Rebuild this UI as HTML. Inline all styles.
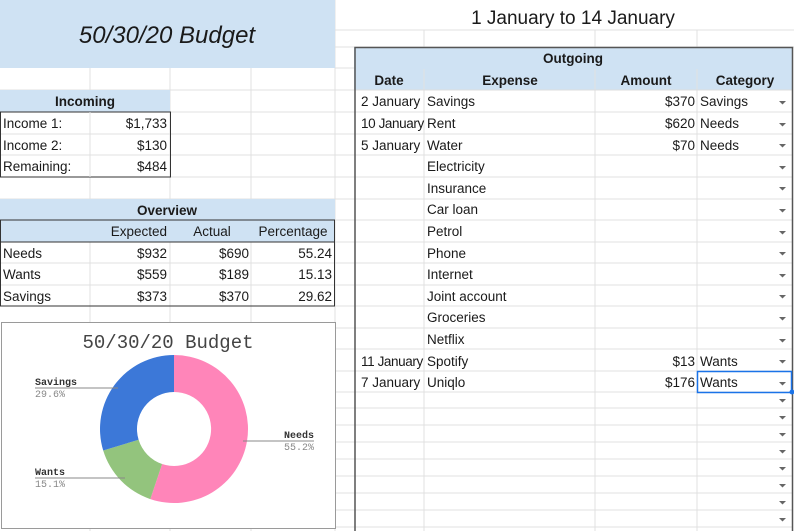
<!DOCTYPE html>
<html><head><meta charset="utf-8"><style>
html,body{margin:0;padding:0;background:#fff;width:794px;height:531px;overflow:hidden}
svg{display:block}
text{font-family:"Liberation Sans",sans-serif;font-size:13.5px;fill:#1a1a1a}
.b{font-weight:bold}
.m{font-family:"Liberation Mono",monospace}
.g{stroke:#e1e1e1;stroke-width:1}
</style></head><body>
<svg width="794" height="531" viewBox="0 0 794 531" xmlns="http://www.w3.org/2000/svg">
<g class="g">
<line x1="0" y1="90" x2="354" y2="90"/><line x1="0" y1="112" x2="354" y2="112"/><line x1="0" y1="134" x2="354" y2="134"/>
<line x1="0" y1="155" x2="354" y2="155"/><line x1="0" y1="177" x2="354" y2="177"/><line x1="0" y1="199" x2="354" y2="199"/>
<line x1="0" y1="220" x2="354" y2="220"/><line x1="0" y1="242" x2="354" y2="242"/><line x1="0" y1="263" x2="354" y2="263"/>
<line x1="0" y1="285" x2="354" y2="285"/><line x1="0" y1="306" x2="354" y2="306"/>
<line x1="90" y1="68" x2="90" y2="531"/><line x1="170" y1="68" x2="170" y2="531"/><line x1="251" y1="68" x2="251" y2="531"/><line x1="335" y1="0" x2="335" y2="531"/>
<line x1="335" y1="30" x2="794" y2="30"/><line x1="335" y1="47" x2="794" y2="47"/>
<line x1="424" y1="30" x2="424" y2="47"/><line x1="595" y1="30" x2="595" y2="47"/><line x1="697" y1="30" x2="697" y2="47"/>
<line x1="335" y1="68" x2="354" y2="68"/>
<line x1="335" y1="328" x2="354" y2="328"/><line x1="335" y1="349" x2="354" y2="349"/><line x1="335" y1="371" x2="354" y2="371"/><line x1="335" y1="392" x2="354" y2="392"/>
<line x1="335" y1="408" x2="354" y2="408"/><line x1="335" y1="425" x2="354" y2="425"/><line x1="335" y1="442" x2="354" y2="442"/><line x1="335" y1="459" x2="354" y2="459"/><line x1="335" y1="476" x2="354" y2="476"/><line x1="335" y1="493" x2="354" y2="493"/><line x1="335" y1="510" x2="354" y2="510"/><line x1="335" y1="527" x2="354" y2="527"/>
</g>
<rect x="0" y="0" width="335" height="68" fill="#cfe2f3"/>
<text x="167" y="43" text-anchor="middle" style="font-size:24px;font-style:italic">50/30/20 Budget</text>
<text x="573" y="24" text-anchor="middle" style="font-size:19px">1 January to 14 January</text>

<rect x="0" y="90" width="170" height="22" fill="#cfe2f3"/>
<text x="85" y="106" text-anchor="middle" class="b">Incoming</text>
<rect x="0.5" y="112" width="170" height="65" fill="none" stroke="#333"/>
<line class="g" x1="90" y1="112" x2="90" y2="177"/>
<text x="3" y="128">Income 1:</text><text x="167" y="128" text-anchor="end">$1,733</text>
<text x="3" y="150">Income 2:</text><text x="167" y="150" text-anchor="end">$130</text>
<text x="3" y="171">Remaining:</text><text x="167" y="171" text-anchor="end">$484</text>

<rect x="0" y="199" width="335" height="43" fill="#cfe2f3"/>
<text x="167" y="215" text-anchor="middle" class="b">Overview</text>
<rect x="0.5" y="220" width="334" height="86" fill="none" stroke="#333"/>
<line x1="0" y1="242" x2="335" y2="242" stroke="#333"/>
<text x="167" y="236" text-anchor="end">Expected</text><text x="212" y="236" text-anchor="middle">Actual</text><text x="293" y="236" text-anchor="middle">Percentage</text>
<text x="3" y="258">Needs</text><text x="167" y="258" text-anchor="end">$932</text><text x="249" y="258" text-anchor="end">$690</text><text x="332" y="258" text-anchor="end">55.24</text>
<text x="3" y="279">Wants</text><text x="167" y="279" text-anchor="end">$559</text><text x="249" y="279" text-anchor="end">$189</text><text x="332" y="279" text-anchor="end">15.13</text>
<text x="3" y="301">Savings</text><text x="167" y="301" text-anchor="end">$373</text><text x="249" y="301" text-anchor="end">$370</text><text x="332" y="301" text-anchor="end">29.62</text>

<rect x="1.5" y="322.5" width="334" height="206" fill="#fff" stroke="#9a9a9a"/>
<text x="168" y="348" text-anchor="middle" class="m" style="font-size:19px;fill:#444">50/30/20 Budget</text>
<path d="M174 355 A74 74 0 1 1 150.3 499.1 L162.1 464 A37 37 0 1 0 174 392 Z" fill="#ff85b9"/>
<path d="M150.3 499.1 A74 74 0 0 1 103.2 450.5 L138.6 439.8 A37 37 0 0 0 162.1 464 Z" fill="#93c47d"/>
<path d="M103.2 450.5 A74 74 0 0 1 174 355 L174 392 A37 37 0 0 0 138.6 439.8 Z" fill="#3c78d8"/>
<line x1="35" y1="388" x2="118" y2="388" stroke="#888"/>
<text x="35" y="385" class="m b" style="font-size:10px;fill:#333">Savings</text>
<text x="35" y="397" class="m" style="font-size:10px;fill:#888">29.6%</text>
<line x1="35" y1="478" x2="125" y2="478" stroke="#888"/>
<text x="35" y="475" class="m b" style="font-size:10px;fill:#333">Wants</text>
<text x="35" y="487" class="m" style="font-size:10px;fill:#888">15.1%</text>
<line x1="243" y1="441" x2="314" y2="441" stroke="#888"/>
<text x="314" y="438" text-anchor="end" class="m b" style="font-size:10px;fill:#333">Needs</text>
<text x="314" y="450" text-anchor="end" class="m" style="font-size:10px;fill:#888">55.2%</text>

<rect x="354" y="47" width="438" height="43" fill="#cfe2f3"/>
<g class="g">
<line x1="354" y1="112" x2="792" y2="112"/><line x1="354" y1="134" x2="792" y2="134"/><line x1="354" y1="155" x2="792" y2="155"/>
<line x1="354" y1="177" x2="792" y2="177"/><line x1="354" y1="199" x2="792" y2="199"/><line x1="354" y1="220" x2="792" y2="220"/>
<line x1="354" y1="242" x2="792" y2="242"/><line x1="354" y1="263" x2="792" y2="263"/><line x1="354" y1="285" x2="792" y2="285"/>
<line x1="354" y1="306" x2="792" y2="306"/><line x1="354" y1="328" x2="792" y2="328"/><line x1="354" y1="349" x2="792" y2="349"/>
<line x1="354" y1="371" x2="792" y2="371"/><line x1="354" y1="392" x2="792" y2="392"/><line x1="354" y1="408" x2="792" y2="408"/>
<line x1="354" y1="425" x2="792" y2="425"/><line x1="354" y1="442" x2="792" y2="442"/><line x1="354" y1="459" x2="792" y2="459"/>
<line x1="354" y1="476" x2="792" y2="476"/><line x1="354" y1="493" x2="792" y2="493"/><line x1="354" y1="510" x2="792" y2="510"/>
<line x1="354" y1="527" x2="792" y2="527"/>
<line x1="424" y1="69" x2="424" y2="531"/><line x1="595" y1="69" x2="595" y2="531"/><line x1="697" y1="69" x2="697" y2="531"/>
</g>
<line x1="354" y1="90" x2="792" y2="90" stroke="#ddd"/>
<path d="M355 531 V47.5 H792.5 V531" fill="none" stroke="#555" stroke-width="1.5"/>
<text x="573" y="63" text-anchor="middle" class="b">Outgoing</text>
<text x="389" y="85" text-anchor="middle" class="b">Date</text>
<text x="510" y="85" text-anchor="middle" class="b">Expense</text>
<text x="646" y="85" text-anchor="middle" class="b">Amount</text>
<text x="745" y="85" text-anchor="middle" class="b">Category</text>
<g>
<text x="361" y="106">2 January</text><text x="427" y="106">Savings</text><text x="695" y="106" text-anchor="end">$370</text><text x="700" y="106">Savings</text>
<text x="361" y="128" style="letter-spacing:-0.4px">10 January</text><text x="427" y="128">Rent</text><text x="695" y="128" text-anchor="end">$620</text><text x="700" y="128">Needs</text>
<text x="361" y="150">5 January</text><text x="427" y="150">Water</text><text x="695" y="150" text-anchor="end">$70</text><text x="700" y="150">Needs</text>
<text x="427" y="171">Electricity</text>
<text x="427" y="193">Insurance</text>
<text x="427" y="214">Car loan</text>
<text x="427" y="236">Petrol</text>
<text x="427" y="258">Phone</text>
<text x="427" y="279">Internet</text>
<text x="427" y="301">Joint account</text>
<text x="427" y="322">Groceries</text>
<text x="427" y="344">Netflix</text>
<text x="361" y="366" style="letter-spacing:-0.4px">11 January</text><text x="427" y="366">Spotify</text><text x="695" y="366" text-anchor="end">$13</text><text x="700" y="366">Wants</text>
<text x="361" y="387">7 January</text><text x="427" y="387">Uniqlo</text><text x="695" y="387" text-anchor="end">$176</text><text x="700" y="387">Wants</text>
</g>
<rect x="697.5" y="371.5" width="94" height="21" fill="none" stroke="#1a73e8" stroke-width="1.5"/>
<circle cx="792" cy="392" r="2.5" fill="#1a73e8"/>
<g fill="#666">
<path d="M779 101h7l-3.5 3.5z"/><path d="M779 123h7l-3.5 3.5z"/><path d="M779 144h7l-3.5 3.5z"/><path d="M779 166h7l-3.5 3.5z"/>
<path d="M779 187h7l-3.5 3.5z"/><path d="M779 209h7l-3.5 3.5z"/><path d="M779 231h7l-3.5 3.5z"/><path d="M779 252h7l-3.5 3.5z"/>
<path d="M779 274h7l-3.5 3.5z"/><path d="M779 295h7l-3.5 3.5z"/><path d="M779 317h7l-3.5 3.5z"/><path d="M779 339h7l-3.5 3.5z"/>
<path d="M779 360h7l-3.5 3.5z"/><path d="M779 382h7l-3.5 3.5z"/><path d="M779 399h7l-3.5 3.5z"/><path d="M779 416h7l-3.5 3.5z"/>
<path d="M779 433h7l-3.5 3.5z"/><path d="M779 450h7l-3.5 3.5z"/><path d="M779 467h7l-3.5 3.5z"/><path d="M779 484h7l-3.5 3.5z"/>
<path d="M779 501h7l-3.5 3.5z"/><path d="M779 518h7l-3.5 3.5z"/>
</g>
</svg>
</body></html>
